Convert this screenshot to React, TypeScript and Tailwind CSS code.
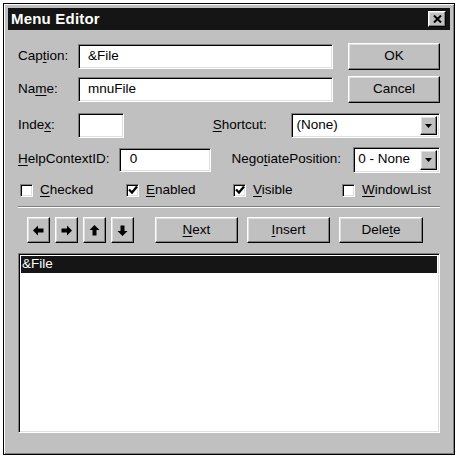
import React from "react";

const raised =
  "border border-t-white border-l-white border-r-black border-b-black bg-[#c0c0c0] shadow-[inset_-1px_-1px_0_#808080,inset_1px_1px_0_#dfdfdf]";
const sunken =
  "border border-t-[#808080] border-l-[#808080] border-r-white border-b-white bg-white shadow-[inset_1px_1px_0_#000,inset_-1px_-1px_0_#dfdfdf]";

// label with one underlined access key
const Acc = ({ text, k }: { text: string; k: number }) => (
  <span>
    {text.slice(0, k)}
    <span className="underline underline-offset-2">{text[k]}</span>
    {text.slice(k + 1)}
  </span>
);

const Field = ({ className, value }: { className: string; value?: string }) => (
  <div className={`${sunken} ${className} flex items-center`}>{value}</div>
);

const Combo = ({ className, value }: { className: string; value: string }) => (
  <div className={`${sunken} ${className} flex items-center p-[2px]`}>
    <span className="flex-1 pl-[2px]">{value}</span>
    <div className={`${raised} w-[17px] h-full flex items-center justify-center`}>
      <svg width="7" height="4" viewBox="0 0 7 4">
        <polygon points="0,0 7,0 3.5,4" fill="#000" />
      </svg>
    </div>
  </div>
);

const Check = ({ checked, label, k, className }: { checked: boolean; label: string; k: number; className: string }) => (
  <div className={`flex items-center gap-[7px] ${className}`}>
    <div className={`${sunken} w-[13px] h-[13px] flex items-center justify-center`}>
      {checked && (
        <svg width="10" height="10" viewBox="0 0 10 10">
          <polyline points="1,4.5 4,7.5 9,1.5" fill="none" stroke="#000" strokeWidth="2.2" />
        </svg>
      )}
    </div>
    <Acc text={label} k={k} />
  </div>
);

const Arrow = ({ dir }: { dir: "left" | "right" | "up" | "down" }) => {
  const rot = { left: 0, right: 180, up: 90, down: 270 }[dir];
  return (
    <svg width="11" height="11" viewBox="0 0 11 11" style={{ transform: `rotate(${rot}deg)` }}>
      <polygon points="0,5.5 5,0.5 5,3.5 10.5,3.5 10.5,7.5 5,7.5 5,10.5" fill="#000" />
    </svg>
  );
};

const Btn = ({ className, children }: { className: string; children: React.ReactNode }) => (
  <div className={`${raised} ${className} flex items-center justify-center`}>{children}</div>
);

export default function App() {
  return (
    <div className="w-[460px] h-[459px] bg-white pt-[3px] pl-[3px] text-[13.5px] text-black font-['Liberation_Sans',Arial,sans-serif]">
      <div className="w-[452px] h-[452px] border border-black bg-[#c0c0c0] shadow-[inset_1px_1px_0_#fff,inset_-1px_-1px_0_#808080] p-[4px] flex flex-col">
        {/* title bar */}
        <div className="h-[22px] bg-[#151515] flex items-center justify-between pl-[3px] pr-[4px]">
          <span className="text-white font-bold text-[15px] tracking-[0.2px]">Menu Editor</span>
          <div className={`${raised} w-[18px] h-[16px] flex items-center justify-center`}>
            <svg width="9" height="8" viewBox="0 0 9 8">
              <path d="M1 0.5 L8 7.5 M8 0.5 L1 7.5" stroke="#000" strokeWidth="2" />
            </svg>
          </div>
        </div>

        <div className="flex flex-col px-[10px]">
          {/* caption */}
          <div className="mt-[13px] h-[27px] flex items-center">
            <span className="w-[60px]"><Acc text="Caption:" k={3} /></span>
            <Field className="w-[255px] h-[25px] pl-[9px]" value="&File" />
            <Btn className="ml-auto w-[92px] h-[27px]">OK</Btn>
          </div>
          {/* name */}
          <div className="mt-[6px] h-[27px] flex items-center">
            <span className="w-[60px]"><Acc text="Name:" k={2} /></span>
            <Field className="w-[255px] h-[25px] pl-[9px]" value="mnuFile" />
            <Btn className="ml-auto w-[92px] h-[27px]">Cancel</Btn>
          </div>
          {/* index / shortcut */}
          <div className="mt-[9px] h-[27px] flex items-center">
            <span className="w-[60px]"><Acc text="Index:" k={4} /></span>
            <Field className="w-[46px] h-[25px]" />
            <span className="ml-[89px] w-[79px]"><Acc text="Shortcut:" k={0} /></span>
            <Combo className="w-[149px] h-[25px]" value="(None)" />
          </div>
          {/* help / negotiate */}
          <div className="mt-[7px] h-[27px] flex items-center">
            <span className="w-[101px]"><Acc text="HelpContextID:" k={0} /></span>
            <Field className="w-[92px] h-[24px] pl-[10px]" value="0" />
            <span className="ml-[21px] w-[122px]"><Acc text="NegotiatePosition:" k={4} /></span>
            <Combo className="w-[87px] h-[26px]" value="0 - None" />
          </div>
          {/* checkboxes */}
          <div className="mt-[7px] h-[20px] flex items-center pl-[2px]">
            <Check className="w-[106px]" checked={false} label="Checked" k={0} />
            <Check className="w-[107px]" checked label="Enabled" k={0} />
            <Check className="w-[109px]" checked label="Visible" k={0} />
            <Check className="" checked={false} label="WindowList" k={0} />
          </div>
          {/* separator */}
          <div className="mt-[6px] h-[2px] border-t border-t-[#808080] border-b border-b-white" />
          {/* buttons */}
          <div className="mt-[9px] h-[26px] flex items-center">
            <div className="ml-[9px] flex gap-[5px]">
              {(["left", "right", "up", "down"] as const).map((d) => (
                <Btn key={d} className="w-[23px] h-[26px]">
                  <Arrow dir={d} />
                </Btn>
              ))}
            </div>
            <Btn className="ml-[21px] w-[83px] h-[26px]"><Acc text="Next" k={0} /></Btn>
            <Btn className="ml-[9px] w-[83px] h-[26px]"><Acc text="Insert" k={0} /></Btn>
            <Btn className="ml-[9px] w-[84px] h-[26px]"><Acc text="Delete" k={4} /></Btn>
          </div>
          {/* list */}
          <div className={`${sunken} mt-[10px] h-[180px] p-[2px]`}>
            <div className="h-[17px] bg-[#151515] text-white flex items-center pl-[1px]">&amp;File</div>
          </div>
        </div>
      </div>
    </div>
  );
}
